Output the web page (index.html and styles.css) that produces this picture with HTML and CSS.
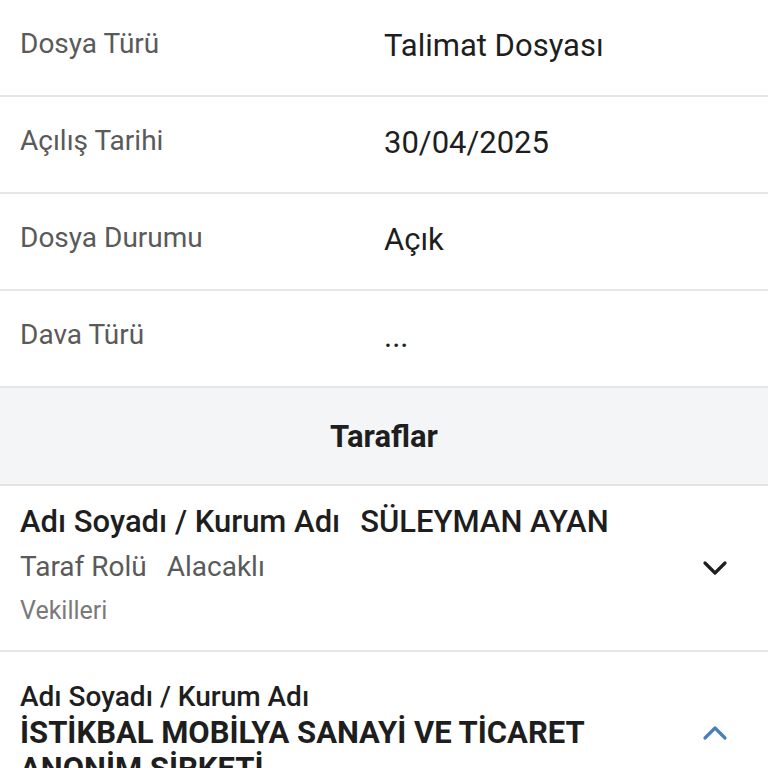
FILE: index.html
```html
<!DOCTYPE html>
<html lang="tr">
<head>
<meta charset="utf-8">
<link rel="stylesheet" href="styles.css">
</head>
<body>
<div class="page">
  <div class="row"><div class="label">Dosya Türü</div><div class="value">Talimat Dosyası</div></div>
  <div class="row"><div class="label">Açılış Tarihi</div><div class="value">30/04/2025</div></div>
  <div class="row"><div class="label">Dosya Durumu</div><div class="value">Açık</div></div>
  <div class="row"><div class="label">Dava Türü</div><div class="value">...</div></div>
  <div class="section">Taraflar</div>
  <div class="party">
    <div class="party-body">
      <div class="p-line"><span class="p-key">Adı Soyadı / Kurum Adı</span><span class="p-name">SÜLEYMAN AYAN</span></div>
      <div class="p-role"><span>Taraf Rolü</span><span>Alacaklı</span></div>
      <div class="p-vek">Vekilleri</div>
    </div>
    <svg class="chev" width="26" height="16" viewBox="0 0 26 16"><path d="M3 3 L13 13 L23 3" fill="none" stroke="#1f1f1f" stroke-width="3.2" stroke-linecap="round" stroke-linejoin="round"/></svg>
  </div>
  <div class="party party2">
    <div class="party-body">
      <div class="p2-key">Adı Soyadı / Kurum Adı</div>
      <div class="p2-name">İSTİKBAL MOBİLYA SANAYİ VE TİCARET ANONİM ŞİRKETİ</div>
    </div>
    <svg class="chev up" width="26" height="16" viewBox="0 0 26 16"><path d="M3 13 L13 3 L23 13" fill="none" stroke="#4a80b8" stroke-width="3.2" stroke-linecap="round" stroke-linejoin="round"/></svg>
  </div>
</div>
</body>
</html>
```
FILE: styles.css
```css
html, body {
  margin: 0;
  padding: 0;
  background: #ffffff;
}
body {
  font-family: Roboto, "Noto Sans", sans-serif;
  overflow: hidden;
}
.page {
  width: 768px;
}
.row {
  display: flex;
  align-items: center;
  height: 95px;
  border-bottom: 2px solid #e6e6e6;
  padding-left: 20px;
}
.label {
  width: 364px;
  font-size: 28px;
  color: #5a5a5a;
  margin-top: -8px;
}
.value {
  font-size: 31px;
  color: #1e1e1e;
  margin-top: -4px;
}
.section {
  height: 96px;
  background: #f4f5f7;
  border-bottom: 2px solid #e3e3e3;
  display: flex;
  align-items: center;
  justify-content: center;
  font-size: 31px;
  font-weight: 700;
  color: #1e1e1e;
}
.party {
  display: flex;
  align-items: center;
  padding: 0 40px 0 20px;
  border-bottom: 2px solid #e6e6e6;
}
.party-body {
  flex: 1;
  padding: 18px 0 23px;
}
.p-line {
  display: flex;
  gap: 20px;
  font-size: 31px;
  font-weight: 500;
  color: #1e1e1e;
  line-height: 36px;
}
.p-role {
  display: flex;
  gap: 20px;
  font-size: 28px;
  color: #5a5a5a;
  margin-top: 10px;
  line-height: 34px;
}
.p-vek {
  font-size: 25px;
  color: #7a7a7a;
  margin-top: 11px;
  line-height: 32px;
}
.party2 {
  border-bottom: none;
  align-items: flex-start;
}
.party2 .party-body {
  padding-top: 29px;
}
.party2 .chev {
  margin-top: 73px;
}
.p2-key {
  font-size: 28px;
  font-weight: 500;
  color: #1e1e1e;
  line-height: 32px;
}
.p2-name {
  font-size: 31px;
  font-weight: 700;
  color: #1e1e1e;
  line-height: 36px;
  margin-top: 2px;
  width: 640px;
}
```
